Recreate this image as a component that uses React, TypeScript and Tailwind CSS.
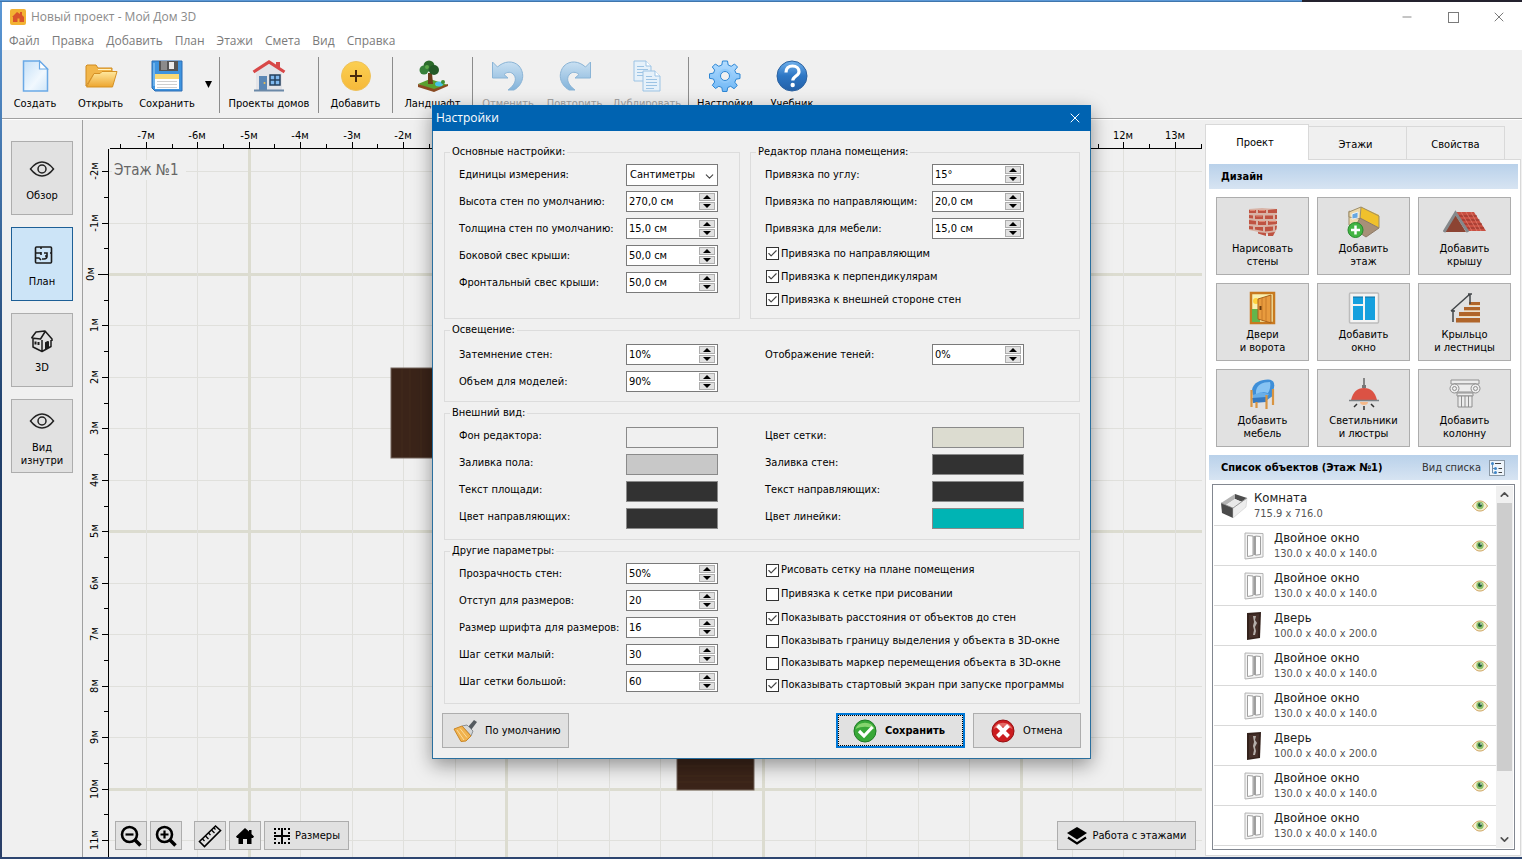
import React, { useId } from "react";
import { Check, ChevronDown, ChevronUp, Minus, X } from "lucide-react";

type IconProps = { className?: string };

/* ---------- toolbar icons ---------- */

const AppIcon = () => (
  <svg width="16" height="16" viewBox="0 0 16 16">
    <rect width="16" height="16" rx="2" fill="#f3b233" />
    <path d="M2 8l5-5 3 2V3h2v3l2 2v5H9.500V9.500h-2V13H3V8z" fill="#d9542b" />
  </svg>
);

const NewFileIcon = () => (
  <svg width="32" height="32" viewBox="0 0 32 32">
    <defs>
      <linearGradient id="sheet" x1="0" y1="0" x2="1" y2="1">
        <stop offset="0" stopColor="#c4e0f8" />
        <stop offset="0.600" stopColor="#f1f8fe" />
        <stop offset="1" stopColor="#cfe6f9" />
      </linearGradient>
    </defs>
    <path d="M4.500 1h16l8 8v22h-24z" fill="url(#sheet)" stroke="#6aa9e6" strokeWidth="1.500" />
    <path d="M20.500 1v8h8z" fill="#fff" stroke="#6aa9e6" strokeWidth="1.200" />
  </svg>
);

const OpenIcon = () => (
  <svg width="34" height="32" viewBox="0 0 34 32">
    <defs>
      <linearGradient id="folder" x1="0" y1="0" x2="0" y2="1">
        <stop offset="0" stopColor="#ffe9a0" />
        <stop offset="1" stopColor="#eda52e" />
      </linearGradient>
    </defs>
    <path d="M2 26V6l1-1h9l2 3h14v6H10z" fill="#f2b64a" stroke="#d08b21" />
    <path d="M27 9.500H14" stroke="#fff3c8" />
    <path d="M2.500 27L10 13.500h6l2-2h15L28.500 27z" fill="url(#folder)" stroke="#d59125" />
  </svg>
);

const SaveIcon = () => (
  <svg width="32" height="32" viewBox="0 0 32 32">
    <path d="M1 1h30v30H4l-3-3z" fill="#3f94df" stroke="#2a6db5" />
    <path d="M3 3v23" stroke="#9bd0f7" />
    <rect x="8" y="1" width="19" height="10" fill="#555" />
    <rect x="10" y="1" width="6" height="9" fill="#8b8b8b" />
    <rect x="18" y="2" width="5" height="7" fill="#ececec" />
    <rect x="4" y="14" width="24" height="15" fill="#fff" />
    <rect x="4" y="14" width="24" height="5" fill="#f9d976" />
    <path d="M6 21.500h20M6 24.500h20M6 27.500h20" stroke="#cfcfcf" />
  </svg>
);

const HousesIcon = () => (
  <svg width="34" height="32" viewBox="0 0 34 32">
    <path d="M4 11l13-9 13 9v20H4z" fill="#e3e4e8" />
    <path d="M24 2h4v6h-4z" fill="#d64a4a" />
    <path d="M1.500 12L17 2l15.500 10" fill="none" stroke="#d84848" strokeWidth="3.200" />
    <rect x="7" y="16" width="8" height="15" fill="#5b87b5" />
    <circle cx="12.500" cy="23" r="1" fill="#f2c14e" />
    <rect x="18" y="15" width="10" height="10" fill="#7fb8ee" stroke="#24405e" strokeWidth="1.500" />
    <path d="M23 15v10M18 20h10" stroke="#24405e" strokeWidth="1.500" />
    <path d="M2 30.500h30" stroke="#6b89a8" strokeWidth="2" />
  </svg>
);

const AddIcon = () => (
  <svg width="32" height="32" viewBox="0 0 32 32">
    <defs>
      <linearGradient id="coin" x1="0" y1="0" x2="0" y2="1">
        <stop offset="0" stopColor="#fbcf52" />
        <stop offset="1" stopColor="#f6b93a" />
      </linearGradient>
    </defs>
    <circle cx="16" cy="16" r="14.500" fill="url(#coin)" stroke="#eec25c" />
    <path d="M16 10v12M10 16h12" stroke="#4a2a0c" strokeWidth="2" />
  </svg>
);

const LandscapeIcon = () => (
  <svg width="32" height="32" viewBox="0 0 32 32">
    <path d="M1 24l12-5 18 6-14 6z" fill="#5aa02f" />
    <path d="M1 24v3l16 5 14-6v-2l-14 5z" fill="#8a4a22" />
    <path d="M11 13h4l1 11h-5z" fill="#6c3d1c" />
    <circle cx="12" cy="6" r="5.500" fill="#2c6b2b" />
    <circle cx="7" cy="10" r="4.500" fill="#37803a" />
    <circle cx="17" cy="10" r="5" fill="#245a28" />
    <circle cx="10" cy="7" r="2" fill="#5aa847" />
    <ellipse cx="22" cy="24" rx="4" ry="2.500" fill="#46c3e8" />
    <circle cx="26" cy="22" r="2" fill="#3f8f33" />
  </svg>
);

const UndoIcon = ({ className }: IconProps) => (
  <svg width="34" height="32" viewBox="0 0 34 32" className={className}>
    <defs>
      <linearGradient id="arrow" x1="0" y1="0" x2="0" y2="1">
        <stop offset="0" stopColor="#c9e0f2" />
        <stop offset="1" stopColor="#83b3da" />
      </linearGradient>
    </defs>
    <path d="M1.500 2l5 5C13 1 22 0 28 6c6 7 5 18-5 24h-6c7-5 9-11 6-15-2.500-3.500-7-3.500-10-.500l4 3.500H1.500z" fill="url(#arrow)" stroke="#8ab4d6" />
  </svg>
);

const DuplicateIcon = () => (
  <svg width="28" height="32" viewBox="0 0 28 32">
    <g fill="#e6f1fa" stroke="#9cc3e4">
      <path d="M1 1h12l5 5v15H1z" />
      <path d="M13 1v5h5" fill="#fff" />
      <path d="M4 6.500h7M4 9.500h11M4 12.500h11M4 15.500h11" />
      <path d="M10 11h12l5 5v15H10z" />
      <path d="M22 11v5h5" fill="#fff" />
      <path d="M13 16.500h6M13 19.500h11M13 22.500h11M13 25.500h11M13 28.500h8" />
    </g>
  </svg>
);

const SettingsIcon = () => (
  <svg width="34" height="32" viewBox="0 0 32 32">
    <defs>
      <linearGradient id="gear" x1="0" y1="0" x2="0" y2="1">
        <stop offset="0" stopColor="#b5ddff" />
        <stop offset="1" stopColor="#6fb7f5" />
      </linearGradient>
    </defs>
    <g fill="url(#gear)" stroke="#2d86d4">
      <path d="M13.500 1h5l.700 4 3 1.300L25.500 4 28.500 7l-2.700 3.300 1.200 3 4 .700v4.500l-4 .700-1.200 3 2.500 3.300-3.300 3.200-3.300-2.400-3 1.200-.700 4h-4.500l-.700-4-3-1.200L6.500 28.500l-3.200-3.200L5.700 22l-1.200-3-4-.700v-4.500l4-.700 1.200-3L3.300 7l3-3L9.800 6.300l3-1.300z" strokeLinejoin="round" />
      <circle cx="16" cy="16" r="7" fill="#8fc9fa" stroke="none" />
      <circle cx="16" cy="16" r="4.500" fill="#f0f0f0" />
    </g>
  </svg>
);

const HelpIcon = () => (
  <svg width="34" height="32" viewBox="0 0 32 32">
    <defs>
      <linearGradient id="ball" x1="0" y1="0" x2="0" y2="1">
        <stop offset="0" stopColor="#6fb0ec" />
        <stop offset="0.500" stopColor="#2d76c4" />
        <stop offset="1" stopColor="#2460a8" />
      </linearGradient>
    </defs>
    <circle cx="16" cy="16" r="15" fill="url(#ball)" stroke="#2c62a0" />
    <path d="M10 12.500c0-4 2.500-6.500 6.500-6.500s6.500 2.500 6.500 5.700c0 4.300-6.200 4.300-6.200 8.800" fill="none" stroke="#fff" strokeWidth="3.200" />
    <circle cx="16.700" cy="25" r="2.200" fill="#fff" />
  </svg>
);

/* ---------- view switcher icons ---------- */

const EyeOutline = () => (
  <svg width="26" height="24" viewBox="0 0 26 24" fill="none" stroke="#222" strokeWidth="1.500">
    <path d="M1.500 12C5 7.500 9 5 13 5s8 2.500 11.500 7C21 16.500 17 19 13 19S5 16.500 1.500 12z" />
    <circle cx="13" cy="12" r="4" />
  </svg>
);

const PlanIcon = () => (
  <svg width="24" height="24" viewBox="0 0 24 24" fill="none" stroke="#1c1c1c" strokeWidth="1.600" className="ml-1">
    <rect x="3.500" y="4" width="16" height="16" rx="1" />
    <path d="M4 10h5M12 10h3v3h-2M18 10h2M9 4v2M9 9v3M4 15h3l2 2M13 16h-3M15 13c0 2-1 3-3 3" />
  </svg>
);

const HouseOutline = () => (
  <svg width="24" height="24" viewBox="0 0 24 24" fill="none" stroke="#1c1c1c" strokeWidth="1.500" strokeLinejoin="round">
    <path d="M1.500 9L6 3l9-1 7 8v2M1.500 9l9 1 5-8M3 9.500V18l9 4.500 9-5V11M12 22V11" />
    <path d="M5.500 12.500v3M8.500 13v3M16 20v-6l2-1v6" strokeWidth="2" />
  </svg>
);

/* ---------- design icons ---------- */

const BrickIcon = () => (
  <svg width="32" height="32" viewBox="0 0 32 32">
    <path d="M2 3l13-1 15 1-1 22-3 4L2 24z" fill="#d8b3a6" />
    <g fill="#bf5342">
      <path d="M2 4h7v3H2zM11 4h8v3h-8zM21 4l9-1v4h-9z" />
      <path d="M2 9l4 .500v3L2 12zM8 9.500h8v3.500H8zM18 9.500h8V13h-8zM28 9h2v4h-2z" />
      <path d="M2 14l7 1v3.500L2 18zM11 15h8v4h-8zM21 15h9v3l-9 1z" />
      <path d="M2 20l4 .500v3L2 23zM8 21h8v4l-8-1.500zM18 21l8-.500v4l-8 1zM28 20l2-.500-.500 4-1.500.500z" />
      <path d="M11 26l8 1v3l-8-2.500zM21 27l7-1-2 4h-5z" />
    </g>
    <path d="M3 4.500h5M12 4.500h6M9 10h6M12 15.500h6M22 15.500h7" stroke="#dd8672" />
  </svg>
);

const FloorIcon = () => (
  <svg width="34" height="32" viewBox="0 0 34 32">
    <path d="M2 7L14 1l17 8-15 8z" fill="#f6e7bd" />
    <path d="M2 5l11 6v11L2 19z" fill="#efdcae" stroke="#9d8d68" />
    <path d="M14 1l18 8v13L13 12z" fill="#f0c12c" />
    <path d="M14 1L2 6v5l11 2z" fill="#ecd9aa" stroke="#9d8d68" />
    <path d="M13 12l19 10-13 9-12-8z" fill="#a79078" stroke="#8d7a66" />
    <path d="M14 1l18 9v12" fill="none" stroke="#9d8d68" />
    <path d="M5 8l6-2v6l-6 1z" fill="#68a8e0" stroke="#fff" strokeWidth="0.800" />
    <circle cx="8.500" cy="24" r="7.500" fill="#43b543" stroke="#258a2b" />
    <path d="M8.500 19.500v9M4 24h9" stroke="#fff" strokeWidth="2.500" />
  </svg>
);

const RoofIcon = () => (
  <svg width="44" height="32" viewBox="0 0 44 32">
    <path d="M13 6h18l12 19H24z" fill="#c95042" />
    <path d="M16 10h18M18.500 14h18M21 18h18M23 22h18" stroke="#8e3028" strokeWidth="1.200" />
    <path d="M18 6l11 19M23 6l11 19M28 6l10 19" stroke="#e07b6c" strokeWidth="0.800" />
    <path d="M12 8l11 18H2z" fill="#8c4433" />
    <path d="M1 26L12.500 7 25 26" fill="none" stroke="#85898c" strokeWidth="3" />
  </svg>
);

const DoorIcon = () => (
  <svg width="28" height="34" viewBox="0 0 28 34">
    <rect x="2" y="2" width="23" height="30" fill="#f8f0b0" stroke="#c8791f" strokeWidth="2.500" />
    <path d="M3 18h8v13H3z" fill="#63b54b" />
    <circle cx="7" cy="10" r="3" fill="#ffd23c" />
    <path d="M9 8l13-4v28L9 28z" fill="#e89b3e" stroke="#a8611a" />
    <path d="M13 7v22M17 6v24" stroke="#c87a28" />
    <path d="M11.500 15v4" stroke="#6b3b0e" strokeWidth="2" />
  </svg>
);

const WindowIcon = () => (
  <svg width="32" height="34" viewBox="0 0 32 34">
    <rect x="1.500" y="2" width="29" height="30" rx="1" fill="#f4f4f4" stroke="#bcbcbc" strokeWidth="1.500" />
    <rect x="5" y="6" width="10" height="7" fill="#16a0de" />
    <rect x="5" y="15" width="10" height="14" fill="#16a0de" />
    <rect x="17" y="6" width="10" height="23" fill="#16a0de" />
    <path d="M5 6h10M17 6h10" stroke="#0f6fa0" />
  </svg>
);

const StairsIcon = () => (
  <svg width="32" height="32" viewBox="0 0 32 32">
    <path d="M20 10h11v3H20zM15 15h16v3.500H15zM10 20h21v4H10zM7 26h24v4.500H7z" fill="#b0652a" />
    <path d="M20 13.500h11M15 19h16M10 24.500h21" stroke="#f3d9b0" />
    <path d="M2 19L21 2M4 18v12M21 2v10M2 19h4M19 2h4" stroke="#43474a" strokeWidth="1.500" fill="none" />
  </svg>
);

const ChairIcon = () => (
  <svg width="30" height="32" viewBox="0 0 30 32">
    <path d="M4 12C5 5 12 1.500 20 1.500c5 0 7 3 6 8l-2 9-7 5H6z" fill="#3f8fd8" />
    <path d="M8 13c1-6 6-9 14-9 1 3 0 8-2 11l-5-1-7 3z" fill="#86c3f3" />
    <path d="M5 17l8-3 8 2-3 4-13 2z" fill="#68aee8" />
    <path d="M4 20l14-1v5L5 25z" fill="#3579c0" />
    <path d="M3.500 12v17M8.500 24v6M18.500 17v14M25 11v16" stroke="#d89543" strokeWidth="2.200" />
  </svg>
);

const LampIcon = () => (
  <svg width="32" height="34" viewBox="0 0 32 34">
    <path d="M16 1v11" stroke="#666" strokeWidth="1.500" />
    <path d="M14 8h4v3h-4z" fill="#777" />
    <path d="M3 23C5 15 9 11 16 11s11 4 13 12z" fill="#db5244" />
    <path d="M1 23.500h30" stroke="#7b8084" strokeWidth="1.500" />
    <path d="M12 25a4 3 0 008 0z" fill="#f5b98a" />
    <path d="M9 27l-3 3M16 29v4M23 27l3 3" stroke="#333" strokeWidth="1.500" />
  </svg>
);

const ColumnIcon = () => (
  <svg width="34" height="32" viewBox="0 0 34 32" stroke="#8f8f8f" fill="#ececec">
    <path d="M3 2h28v4H3z" />
    <path d="M6 6h22l-1 8H7z" />
    <circle cx="6.500" cy="10.500" r="4.500" />
    <circle cx="6.500" cy="10.500" r="2" />
    <circle cx="27.500" cy="10.500" r="4.500" />
    <circle cx="27.500" cy="10.500" r="2" />
    <path d="M9 15h16v3H9z" />
    <path d="M10 18h14v11H10zM13.500 18v11M17 18v11M20.500 18v11" />
  </svg>
);

/* ---------- object list icons ---------- */

const RoomIcon = () => (
  <svg width="28" height="26" viewBox="0 0 28 26">
    <path d="M15 1L1 10l5 2 9-6z" fill="#b4b4b4" />
    <path d="M15 1l12 4-5 4-7-3z" fill="#4d4d4d" />
    <path d="M15 6l7 3-9 5-7-2z" fill="#e8e8e8" />
    <path d="M1 10l12 5v10L2 20z" fill="#4a4a4a" />
    <path d="M13 15l14-10-1 9-13 11z" fill="#ededed" stroke="#c4c4c4" strokeWidth="0.500" />
    <path d="M1 10l12 5L27 5" fill="none" stroke="#8a8a8a" strokeWidth="0.800" />
  </svg>
);

const FrameIcon = () => (
  <svg width="20" height="28" viewBox="0 0 20 28" fill="none">
    <path d="M1 1l18 .500V25L1 27z" fill="#f4f4f4" stroke="#b4b4b4" />
    <path d="M3.500 3.500L9 4v19.500l-5.500 1zM11.500 4l5 .500V22.500l-5 .700z" fill="#fff" stroke="#a0a0a0" />
    <path d="M10.200 4v19" stroke="#777" />
  </svg>
);

const DarkDoorIcon = () => (
  <svg width="20" height="30" viewBox="0 0 20 30">
    <path d="M3 2l14-1-1 26-13 2z" fill="#34221c" />
    <path d="M5 4l10-1-1 23-9 1z" fill="#46302a" />
    <path d="M9 5h3l-1 4 2 3-2 4 1 4-1 4H9l1-5-1-4 1-4z" fill="#b5aeaa" />
  </svg>
);

const VisibleIcon = () => (
  <svg width="16" height="12" viewBox="0 0 16 12">
    <path d="M0.500 6C3 2 5.500 1 8 1s5 1 7.500 5C13 10 10.500 11 8 11S3 10 .500 6z" fill="#f5efcf" stroke="#cda25c" />
    <circle cx="8" cy="5.500" r="3.700" fill="#8cc069" />
    <circle cx="8" cy="5" r="2" fill="#23583c" />
    <circle cx="9" cy="4" r="0.800" fill="#fff" />
  </svg>
);

const TreeIcon = () => (
  <svg width="16" height="16" viewBox="0 0 16 16" fill="none">
    <rect x="0.500" y="0.500" width="15" height="15" fill="#eef5fb" stroke="#8a98a5" />
    <path d="M3.500 4v9h3M3.500 8.500h3" stroke="#6e8aa5" />
    <circle cx="3.500" cy="3.500" r="1.500" fill="#3f87c9" />
    <circle cx="6.500" cy="8.500" r="1.500" fill="#3f87c9" />
    <circle cx="6.500" cy="12.500" r="1.500" fill="#3f87c9" />
    <path d="M6 3.500h6M9.500 8.500H13M9.500 12.500H13" stroke="#444" />
  </svg>
);

/* ---------- plan tools and dialog icons ---------- */

const ZoomIcon = ({ plus }: { plus?: boolean }) => (
  <svg width="22" height="22" viewBox="0 0 22 22" fill="none" stroke="#000">
    <circle cx="9.500" cy="9.500" r="7.500" strokeWidth="2.600" />
    <path d="M15 15l5.500 5.500" strokeWidth="3.500" />
    <path d={plus ? "M9.500 5.500v8M5.500 9.500h8" : "M5.500 9.500h8"} strokeWidth="2.200" />
  </svg>
);

const RulerIcon = () => (
  <svg width="24" height="24" viewBox="0 0 24 24" fill="none" stroke="#000" strokeWidth="1.600">
    <path d="M1.500 17.500l16-15.500 5 4.500-16 16z" />
    <path d="M4.500 15l2 2M7.500 12l3 3M10.500 9l2 2M13.500 6l3 3M16 4l1.500 1.500" strokeWidth="1.300" />
  </svg>
);

const HomeIcon = () => (
  <svg width="18" height="16" viewBox="0 0 18 16">
    <path d="M9 0l4 3.500V2h2.500v4L18 8.500 17 10h-1.500v6H11v-5H7v5H2.500v-6H1L0 8.500z" />
  </svg>
);

const SizesIcon = () => (
  <svg width="18" height="18" viewBox="0 0 18 18" fill="none" stroke="#000" strokeWidth="2" shapeRendering="crispEdges">
    <path d="M9 1v16M1 9h16" />
    <path d="M1 2h6M11 2h6M1 16h6M11 16h6" strokeDasharray="2 2" />
    <path d="M2 5v2M16 5v2M2 11v2M16 11v2" />
  </svg>
);

const LayersIcon = () => (
  <svg width="20" height="18" viewBox="0 0 20 18">
    <path d="M10 0l10 6-10 6.500L0 6z" />
    <path d="M1 10.500l9 6 9-6" fill="none" stroke="#000" strokeWidth="2.200" />
  </svg>
);

const BrushIcon = () => (
  <svg width="24" height="24" viewBox="0 0 24 24">
    <path d="M15 8l6-7 3 2-6 8z" fill="#555b60" />
    <path d="M9 7l5-1 6 6-2 5z" fill="#d3d6d8" stroke="#8a8f93" />
    <path d="M1 10l8-3 9 10-5 5-5 .500z" fill="#f0b24e" stroke="#c98728" />
    <path d="M4 11l7 10M7 9.500l7 9" stroke="#fbdc9c" />
  </svg>
);

const OkIcon = () => (
  <svg width="24" height="24" viewBox="0 0 24 24">
    <circle cx="12" cy="12" r="11" fill="#38a838" stroke="#1e7a25" />
    <path d="M2.500 10a10 9 0 0119 0c-6-3-13-3-19 0z" fill="#86d56f" />
    <path d="M6 12l5 5 8.500-9" fill="none" stroke="#fff" strokeWidth="3.200" />
  </svg>
);

const CancelIcon = () => (
  <svg width="24" height="24" viewBox="0 0 24 24">
    <circle cx="12" cy="12" r="11" fill="#cb1d20" stroke="#961113" />
    <path d="M2.500 10a10 9 0 0119 0c-6-3-13-3-19 0z" fill="#e36b66" />
    <path d="M6.500 6.500l11 11M17.500 6.500l-11 11" stroke="#fff" strokeWidth="4" />
  </svg>
);

/* ---------- main window ---------- */

const TitleBar = () => (
  <header className="bg-white pb-px text-xs text-[#7a7a7a] font-['Open_Sans',sans-serif]">
    <div className="flex h-[30px] items-center pl-2">
      <AppIcon />
      <span className="ml-[5px] flex-1 text-[#8a8a8a]">Новый проект - Мой Дом 3D</span>
      <button aria-label="Свернуть" className="flex w-[46px] justify-center"><Minus size={14} strokeWidth={1.5} /></button>
      <button aria-label="Развернуть" className="flex w-[46px] justify-center"><span className="size-[11px] border border-[#7a7a7a]" /></button>
      <button aria-label="Закрыть" className="flex w-[46px] justify-center"><X size={16} strokeWidth={1.5} /></button>
    </div>
    <nav className="flex h-[17px] items-end gap-3 pl-[7px]">
      {["Файл", "Правка", "Добавить", "План", "Этажи", "Смета", "Вид", "Справка"].map((item) => (
        <button key={item}>{item}</button>
      ))}
    </nav>
  </header>
);

const Tool = ({ icon, label, width, disabled }: { icon: React.ReactNode; label: string; width: string; disabled?: boolean }) => (
  <button disabled={disabled} className={`flex shrink-0 flex-col items-center gap-1 pt-[3px] whitespace-nowrap disabled:text-[#a3a3a3] ${width}`}>
    {icon}
    <span className="leading-4">{label}</span>
  </button>
);

const Separator = () => <div className="mx-px h-14 w-px shrink-0 bg-[#8c8c8c]" />;

const Toolbar = () => (
  <div className="flex h-[69px] items-start border-b border-[#a0a0a0] pt-[7px]">
    <Tool icon={<NewFileIcon />} label="Создать" width="w-[66px]" />
    <Tool icon={<OpenIcon />} label="Открыть" width="w-[65px]" />
    <Tool icon={<SaveIcon />} label="Сохранить" width="w-[68px]" />
    <button aria-label="Варианты сохранения" className="mt-6 mr-[6px] flex w-[11px] justify-end">
      <svg width="7" height="7" viewBox="0 0 7 7"><path d="M0 0h7L3.500 7z" /></svg>
    </button>
    <Separator />
    <Tool icon={<HousesIcon />} label="Проекты домов" width="w-24" />
    <Separator />
    <Tool icon={<AddIcon />} label="Добавить" width="w-[71px]" />
    <Separator />
    <Tool icon={<LandscapeIcon />} label="Ландшафт" width="w-[77px]" />
    <Separator />
    <Tool icon={<UndoIcon />} label="Отменить" width="w-[68px]" disabled />
    <Tool icon={<UndoIcon className="-scale-x-100" />} label="Повторить" width="w-[65px]" disabled />
    <Tool icon={<DuplicateIcon />} label="Дублировать" width="w-20" disabled />
    <Separator />
    <Tool icon={<SettingsIcon />} label="Настройки" width="w-[70px]" />
    <Tool icon={<HelpIcon />} label="Учебник" width="w-16" />
  </div>
);

const views = [
  { label: "Обзор", icon: <EyeOutline /> },
  { label: "План", icon: <PlanIcon />, active: true },
  { label: "3D", icon: <HouseOutline /> },
  { label: "Вид изнутри", icon: <EyeOutline /> },
];

const ViewSwitcher = () => (
  <aside className="flex w-[81px] shrink-0 flex-col gap-3 border-r border-[#a0a0a0] pt-[21px] pl-[9px]">
    {views.map((view) => (
      <button
        key={view.label}
        className={`flex h-[74px] w-[62px] flex-col items-center justify-center gap-2 border px-2 pt-[3px] leading-[13px] ${
          view.active ? "border-[#1d5f96] bg-[#cce4f7]" : "border-[#adadad] bg-[#e1e1e1]"
        }`}
      >
        {view.icon}
        {view.label}
      </button>
    ))}
  </aside>
);

// metres to canvas pixels
const STEP = 51.45;
const ZERO_X = 422;
const ZERO_Y = 154;
const LEFT = 25;
const TOP = 28;

const columns = Array.from({ length: 43 }, (_, i) => i / 2 - 7.5);
const rows = Array.from({ length: 27 }, (_, i) => i / 2 - 2);
const px = (value: number) => Math.round(value) + 0.5;

const PlanCanvas = () => (
  <svg className="block size-full text-[11px]">
    {rows.filter(Number.isInteger).map((m) => (
      <line key={m} x1={LEFT} x2="100%" y1={px(ZERO_Y + m * STEP)} y2={px(ZERO_Y + m * STEP)} stroke={m % 5 ? "#e0e0dc" : "#dcdcd0"} strokeWidth={m % 5 ? 1 : 3} />
    ))}
    {columns.filter(Number.isInteger).map((m) => (
      <line key={m} y1={TOP} y2="100%" x1={px(ZERO_X + m * STEP)} x2={px(ZERO_X + m * STEP)} stroke={m % 5 ? "#e0e0dc" : "#dcdcd0"} strokeWidth={m % 5 ? 1 : 3} />
    ))}
    <rect x="28" y="40" width="74" height="20" fill="#f0f0f0" />
    <text x="30" y="55" fontSize="15" fill="#666">Этаж №1</text>

    <rect x="307" y="248" width="90" height="90" fill="#3b2419" stroke="#74655c" />
    <path d="M318 249v88M326 249v88M337 249v88" stroke="#432a1d" />
    <rect x="593" y="590" width="77" height="80" fill="#3b2419" stroke="#74655c" />
    <path d="M594 646h75M594 656h75M594 662h75" stroke="#432a1d" />

    <path d={`M${LEFT + 1} 28.500H3000M24.500 29V2000`} stroke="#000" />
    {columns.map((m) => (
      <g key={m}>
        <line x1={px(ZERO_X + m * STEP)} x2={px(ZERO_X + m * STEP)} y1={Number.isInteger(m) ? 22 : 24} y2="28" stroke="#000" />
        {Number.isInteger(m) && <text x={Math.round(ZERO_X + m * STEP)} y="19" textAnchor="middle">{m}м</text>}
      </g>
    ))}
    {rows.map((m) => (
      <g key={m}>
        <line y1={px(ZERO_Y + m * STEP)} y2={px(ZERO_Y + m * STEP)} x1={m === 0 ? 14 : Number.isInteger(m) ? 18 : 20} x2="24" stroke="#000" />
        {Number.isInteger(m) && (
          <text textAnchor="middle" transform={`translate(${m === 0 ? 10 : 14} ${Math.round(ZERO_Y + m * STEP)}) rotate(-90)`}>{m}м</text>
        )}
      </g>
    ))}
  </svg>
);

const planButton = "flex h-[29px] items-center justify-center border border-[#adadad] bg-[#e1e1e1]";

const Plan = () => (
  <main className="relative ml-px min-w-0 flex-1">
    <PlanCanvas />
    <div className="absolute inset-x-[6px] bottom-[7px] left-[31px] flex justify-between">
      <div className="flex gap-[3px]">
        <button aria-label="Уменьшить" className={`${planButton} w-8`}><ZoomIcon /></button>
        <button aria-label="Увеличить" className={`${planButton} mr-[9px] w-8`}><ZoomIcon plus /></button>
        <button aria-label="Линейка" className={`${planButton} w-8`}><RulerIcon /></button>
        <button aria-label="В начало" className={`${planButton} w-8`}><HomeIcon /></button>
        <button className={`${planButton} w-[85px] gap-1`}><SizesIcon />Размеры</button>
      </div>
      <button className={`${planButton} w-[139px] gap-[6px]`}><LayersIcon />Работа с этажами</button>
    </div>
  </main>
);

const designActions = [
  { lines: ["Нарисовать", "стены"], icon: <BrickIcon /> },
  { lines: ["Добавить", "этаж"], icon: <FloorIcon /> },
  { lines: ["Добавить", "крышу"], icon: <RoofIcon /> },
  { lines: ["Двери", "и ворота"], icon: <DoorIcon /> },
  { lines: ["Добавить", "окно"], icon: <WindowIcon /> },
  { lines: ["Крыльцо", "и лестницы"], icon: <StairsIcon /> },
  { lines: ["Добавить", "мебель"], icon: <ChairIcon /> },
  { lines: ["Светильники", "и люстры"], icon: <LampIcon /> },
  { lines: ["Добавить", "колонну"], icon: <ColumnIcon /> },
];

const windowItem = { name: "Двойное окно", size: "130.0 x 40.0 x 140.0", icon: <FrameIcon /> };
const doorItem = { name: "Дверь", size: "100.0 x 40.0 x 200.0", icon: <DarkDoorIcon /> };
const objects = [windowItem, windowItem, doorItem, windowItem, windowItem, doorItem, windowItem, windowItem];

const ObjectRow = ({ name, size, icon, root }: { name: string; size: string; icon: React.ReactNode; root?: boolean }) => (
  <li className={`flex h-10 shrink-0 items-center border-b border-[#d9d9d9] ${root ? "pl-[6px]" : "pl-[30px]"}`}>
    <span className={`shrink-0 ${root ? "w-[34px]" : "w-[30px]"}`}>{icon}</span>
    <span className="flex-1">
      <span className="block text-[13px] leading-4 text-[#222]">{name}</span>
      <span className="block text-[11px] leading-4 text-[#555]">{size}</span>
    </span>
    <button aria-label={`Видимость: ${name}`} className="mr-2"><VisibleIcon /></button>
  </li>
);

const ProjectPanel = () => (
  <aside className="ml-[3px] flex w-[317px] shrink-0 flex-col pt-1 pr-px pb-px">
    <div className="flex items-end" role="tablist">
      <button role="tab" aria-selected="true" className="relative -mb-px h-9 w-[104px] border border-b-0 border-[#d9d9d9] bg-white pr-1">Проект</button>
      <button role="tab" className="h-[33px] w-[98px] border border-b-0 border-l-0 border-[#d9d9d9] pt-[3px] pr-1">Этажи</button>
      <button role="tab" className="h-[33px] w-[98px] border border-b-0 border-l-0 border-[#d9d9d9] pt-[3px]">Свойства</button>
    </div>
    <div className="flex min-h-0 flex-1 flex-col border border-[#d9d9d9] bg-white pt-1 pr-[2px] pb-[5px] pl-[3px]">
      <h2 className="flex h-[25px] shrink-0 items-center bg-linear-to-b from-[#b9d1ea] to-[#d7e4f2] pl-3 font-bold">Дизайн</h2>
      <div className="grid grid-cols-3 gap-2 px-[7px] py-2">
        {designActions.map((action) => (
          <button key={action.lines.join(" ")} className="flex h-[78px] flex-col items-center justify-between border border-[#adadad] bg-[#e1e1e1] pt-2 pb-[6px] leading-[13px]">
            <span className="flex h-8 items-center">{action.icon}</span>
            <span>{action.lines[0]}<br />{action.lines[1]}</span>
          </button>
        ))}
      </div>
      <div className="flex h-[25px] shrink-0 items-center bg-linear-to-b from-[#b9d1ea] to-[#d7e4f2] pr-[13px] pl-3">
        <h2 className="flex-1 font-bold">Список объектов (Этаж №1)</h2>
        <button className="flex items-center gap-2 text-[#333]">Вид списка<TreeIcon /></button>
      </div>
      <div className="mx-[3px] mt-1 flex min-h-0 flex-1 border border-[#828790] p-px">
        <ul className="flex flex-1 flex-col overflow-hidden">
          <ObjectRow root name="Комната" size="715.9 x 716.0" icon={<RoomIcon />} />
          {objects.map((item, idx) => (
            <ObjectRow key={idx} {...item} />
          ))}
        </ul>
        <div className="flex w-[17px] flex-col items-center bg-[#f0f0f0] text-[#505050]">
          <button aria-label="Вверх" className="flex h-[17px] items-center"><ChevronUp size={13} strokeWidth={3} /></button>
          <div className="h-[268px] w-[15px] bg-[#cdcdcd]" />
          <button aria-label="Вниз" className="mt-auto flex h-[17px] items-center"><ChevronDown size={13} strokeWidth={3} /></button>
        </div>
      </div>
    </div>
  </aside>
);

/* ---------- settings dialog ---------- */

const Group = ({ title, className, children }: { title: string; className: string; children: React.ReactNode }) => (
  <fieldset className={`border border-[#dcdcdc] pl-[14px] ${className}`}>
    <legend className="-ml-[9px] px-[2px] leading-[14px]">{title}</legend>
    {children}
  </fieldset>
);

const Spinner = ({ label, value }: { label: string; value: string }) => {
  const id = useId();
  return (
    <div className="flex h-[27px] items-center">
      <label htmlFor={id} className="w-[167px] whitespace-nowrap">{label}</label>
      <div className="flex h-[21px] w-[92px] items-center border border-[#7a7a7a] bg-white pr-[2px] pl-[2px]">
        <input id={id} defaultValue={value} className="min-w-0 flex-1 outline-none" />
        <div className="flex flex-col gap-px">
          <button aria-label="Больше" className="flex h-2 w-4 items-center justify-center border border-[#adadad] bg-[#e1e1e1]">
            <svg width="8" height="4" viewBox="0 0 8 4"><path d="M0 4l4-4 4 4z" /></svg>
          </button>
          <button aria-label="Меньше" className="flex h-2 w-4 items-center justify-center border border-[#adadad] bg-[#e1e1e1]">
            <svg width="8" height="4" viewBox="0 0 8 4"><path d="M0 0l4 4 4-4z" /></svg>
          </button>
        </div>
      </div>
    </div>
  );
};

const ColorField = ({ label, color }: { label: string; color: string }) => {
  const id = useId();
  return (
    <div className="flex h-[27px] items-center">
      <label htmlFor={id} className="w-[167px] pb-1 whitespace-nowrap">{label}</label>
      <button id={id} className={`h-[21px] w-[92px] border border-[#8a8a8a] ${color}`} />
    </div>
  );
};

const Checkbox = ({ label, checked, height = "h-[22px]" }: { label: string; checked?: boolean; height?: string }) => (
  <label className={`ml-px flex items-center gap-[2px] whitespace-nowrap ${height}`}>
    <span className="relative flex">
      <input type="checkbox" defaultChecked={checked} className="peer size-[13px] appearance-none border border-[#333] bg-white" />
      <Check size={11} strokeWidth={2.5} className="pointer-events-none absolute top-px left-px hidden text-[#444] peer-checked:block" />
    </span>
    {label}
  </label>
);

const SettingsDialog = () => (
  <div role="dialog" aria-label="Настройки" className="absolute top-[105px] left-[432px] w-[659px] border border-[#2a6f9e] bg-[#f0f0f0] shadow-[0_6px_18px_rgba(0,0,0,0.4)]">
    <div className="-mx-px -mt-px flex h-[26px] items-center justify-between bg-[#0063b1] pr-2 pl-1 text-xs text-white font-['Open_Sans',sans-serif]">
      Настройки
      <button aria-label="Закрыть"><X size={16} strokeWidth={1.5} /></button>
    </div>

    <div className="flex flex-col gap-1 pt-[14px] pr-[10px] pl-[11px]">
      <div className="flex gap-[10px]">
        <Group title="Основные настройки:" className="w-[296px] pt-[2px] pb-[22px]">
          <div className="flex h-[27px] items-center">
            <label htmlFor="units" className="w-[167px]">Единицы измерения:</label>
            <div className="relative w-[92px]">
              <select id="units" className="block h-[22px] w-full appearance-none border border-[#7a7a7a] bg-white pl-[3px]">
                <option>Сантиметры</option>
              </select>
              <ChevronDown size={13} strokeWidth={2} className="pointer-events-none absolute top-[6px] right-[2px] text-[#444]" />
            </div>
          </div>
          <Spinner label="Высота стен по умолчанию:" value="270,0 см" />
          <Spinner label="Толщина стен по умолчанию:" value="15,0 см" />
          <Spinner label="Боковой свес крыши:" value="50,0 см" />
          <Spinner label="Фронтальный свес крыши:" value="50,0 см" />
        </Group>
        <Group title="Редактор плана помещения:" className="flex-1 pt-[2px]">
          <Spinner label="Привязка по углу:" value="15°" />
          <Spinner label="Привязка по направляющим:" value="20,0 см" />
          <Spinner label="Привязка для мебели:" value="15,0 см" />
          <Checkbox label="Привязка по направляющим" height="h-[23px]" checked />
          <Checkbox label="Привязка к перпендикулярам" height="h-[23px]" checked />
          <Checkbox label="Привязка к внешней стороне стен" height="h-[23px]" checked />
        </Group>
      </div>

      <Group title="Освещение:" className="pt-1 pb-[6px]">
        <div className="flex">
          <div className="w-[306px]">
            <Spinner label="Затемнение стен:" value="10%" />
            <Spinner label="Объем для моделей:" value="90%" />
          </div>
          <Spinner label="Отображение теней:" value="0%" />
        </div>
      </Group>

      <Group title="Внешний вид:" className="pt-1 pb-[7px]">
        <div className="flex">
          <div className="w-[306px]">
            <ColorField label="Фон редактора:" color="bg-[#f0f0f0]" />
            <ColorField label="Заливка пола:" color="bg-[#c8c8c8]" />
            <ColorField label="Текст площади:" color="bg-[#323232]" />
            <ColorField label="Цвет направляющих:" color="bg-[#323232]" />
          </div>
          <div>
            <ColorField label="Цвет сетки:" color="bg-[#dcdcd0]" />
            <ColorField label="Заливка стен:" color="bg-[#323232]" />
            <ColorField label="Текст направляющих:" color="bg-[#323232]" />
            <ColorField label="Цвет линейки:" color="bg-[#00b4b4]" />
          </div>
        </div>
      </Group>

      <Group title="Другие параметры:" className="pb-[7px]">
        <div className="flex">
          <div className="w-[306px] pt-[2px]">
            <Spinner label="Прозрачность стен:" value="50%" />
            <Spinner label="Отступ для размеров:" value="20" />
            <Spinner label="Размер шрифта для размеров:" value="16" />
            <Spinner label="Шаг сетки малый:" value="30" />
            <Spinner label="Шаг сетки большой:" value="60" />
          </div>
          <div>
            <Checkbox label="Рисовать сетку на плане помещения" height="h-6" checked />
            <Checkbox label="Привязка к сетке при рисовании" height="h-6" />
            <Checkbox label="Показывать расстояния от объектов до стен" height="h-6" checked />
            <Checkbox label="Показывать границу выделения у объекта в 3D-окне" />
            <Checkbox label="Показывать маркер перемещения объекта в 3D-окне" />
            <Checkbox label="Показывать стартовый экран при запуске программы" checked />
          </div>
        </div>
      </Group>
    </div>

    <div className="flex gap-2 px-[9px] pt-[9px] pb-[10px]">
      <button className="mr-auto flex h-[35px] w-[127px] items-center gap-2 border border-[#adadad] bg-[#e1e1e1] pl-[10px]">
        <BrushIcon />По умолчанию
      </button>
      <button className="flex h-[35px] w-[129px] items-center gap-2 border-2 border-[#0078d7] bg-[#e1e1e1] pl-[15px] font-bold outline-1 -outline-offset-3 outline-dotted outline-black">
        <OkIcon />Сохранить
      </button>
      <button className="flex h-[35px] w-[108px] items-center gap-2 border border-[#adadad] bg-[#e1e1e1] pl-[17px]">
        <CancelIcon />Отмена
      </button>
    </div>
  </div>
);

export default function App() {
  return (
    <div className="relative flex h-screen flex-col overflow-hidden bg-[#f0f0f0] text-[11px] leading-[14px] text-black font-['DejaVu_Sans_Condensed','DejaVu_Sans',sans-serif]">
      <div className="flex h-[2px] shrink-0">
        <div className="flex-1 border-b border-[#3f76ad] bg-[#5b98d6]" />
        <div className="w-[220px] bg-[#24222e]" />
      </div>
      <div className="flex min-h-0 flex-1">
        <div className="w-[2px] shrink-0 bg-linear-to-b from-[#5b98d6] via-[#20406b] to-[#2a3f68]" />
        <div className="flex min-w-0 flex-1 flex-col">
          <TitleBar />
          <Toolbar />
          <div className="flex min-h-0 flex-1 border-t border-white">
            <ViewSwitcher />
            <Plan />
            <ProjectPanel />
          </div>
        </div>
      </div>
      <div className="h-[2px] shrink-0 bg-[#2d4570]" />
      <SettingsDialog />
    </div>
  );
}
